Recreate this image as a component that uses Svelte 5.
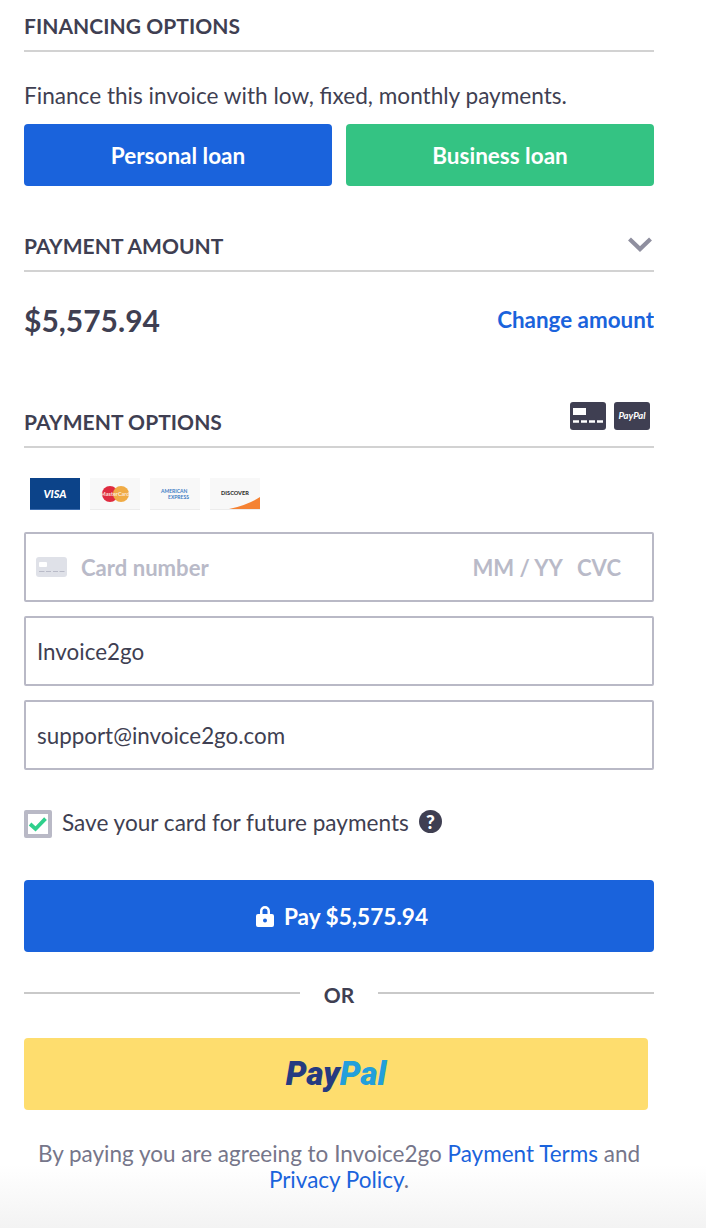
<script>
  const total = '$5,575.94';
  const brands = ['visa', 'mc', 'amex', 'discover'];
</script>

<div class="page">
  <h2 class="head">FINANCING OPTIONS</h2>
  <p class="finance">Finance this invoice with low, fixed, monthly payments.</p>
  <div class="loans">
    <button class="loan blue">Personal loan</button>
    <button class="loan green">Business loan</button>
  </div>

  <div class="head amount-head">
    <h2>PAYMENT AMOUNT</h2>
    <svg class="chevron" width="26" height="16" viewBox="0 0 26 16">
      <path d="M2.5 3 L13 13 L23.5 3" fill="none" stroke="#8f8f9f" stroke-width="4.2" />
    </svg>
  </div>
  <div class="amount-row">
    <span class="amount">{total}</span>
    <a class="change">Change amount</a>
  </div>

  <div class="head options-head">
    <h2>PAYMENT OPTIONS</h2>
    <div class="methods">
      <div class="method">
        <svg width="36" height="28" viewBox="0 0 36 28">
          <rect x="3" y="6" width="13" height="7" fill="#fff" />
          <path d="M3 19.5h6M11 19.5h6M19 19.5h6M27 19.5h6" stroke="#fff" stroke-width="2.4" />
        </svg>
      </div>
      <div class="method pp">PayPal</div>
    </div>
  </div>

  <div class="brands">
    {#each brands as b}
      <div class="brand {b}">
        {#if b === 'visa'}
          <span>VISA</span>
        {:else if b === 'mc'}
          <i class="red"></i><i class="orange"></i><span>MasterCard</span>
        {:else if b === 'amex'}
          <span>AMERICAN<br /><em>EXPRESS</em></span>
        {:else}
          <span>DISCOVER</span>
          <svg width="50" height="32" viewBox="0 0 50 32"><path d="M14 32 Q36 28 50 19 V32 Z" fill="#f58233" /></svg>
        {/if}
      </div>
    {/each}
  </div>

  <div class="field card">
    <svg width="31" height="20" viewBox="0 0 31 20">
      <rect width="31" height="20" rx="3" fill="#dfe1e8" />
      <rect x="3" y="5" width="8" height="5" rx="1" fill="#fff" />
      <path d="M3 14.5h5.5M10 14.5h5M17 14.5h5M23.500 14.500h5" stroke="#b9bbc8" stroke-width="1.200" />
    </svg>
    <span class="ph num">Card number</span>
    <span class="ph date">MM / YY</span>
    <span class="ph cvc">CVC</span>
  </div>
  <div class="field">Invoice2go</div>
  <div class="field">support@invoice2go.com</div>

  <div class="save">
    <span class="check">
      <svg width="24" height="20" viewBox="0 0 24 20">
        <path d="M2.500 10 L9 16 L21 3.500" fill="none" stroke="#2fd08c" stroke-width="4.500" />
      </svg>
    </span>
    <span class="save-label">Save your card for future payments</span>
    <span class="help">?</span>
  </div>

  <button class="pay">
    <svg width="18" height="22" viewBox="0 0 18 22">
      <path fill-rule="evenodd" fill="#fff" d="M4 9V6a5 5 0 0 1 10 0v3h2a2 2 0 0 1 2 2v9a2 2 0 0 1-2 2H2a2 2 0 0 1-2-2v-9a2 2 0 0 1 2-2zM6.500 9h5V6a2.500 2.500 0 0 0-5 0zM9 13.500a2 2 0 1 0 0 4 2 2 0 0 0 0-4z" />
    </svg>
    Pay {total}
  </button>

  <div class="or"><span>OR</span></div>

  <button class="paypal"><b>Pay</b><b class="pal">Pal</b></button>

  <p class="terms">
    By paying you are agreeing to Invoice2go <a>Payment Terms</a> and<br />
    <a>Privacy Policy</a>.
  </p>
</div>

<style>
  :global(body) {
    margin: 0;
    overflow: hidden;
    background: linear-gradient(#fff 1165px, #f3f3f3 1228px);
    height: 1228px;
  }
  .page {
    box-sizing: border-box;
    width: 630px;
    height: 1228px;
    margin-left: 24px;
    overflow: hidden;
    font-family: Lato, sans-serif;
    color: #3f3f52;
    font-size: 22.6px;
  }
  h2 {
    margin: 0;
    font-size: 21px;
    font-weight: 700;
    line-height: 24px;
    color: #3f3f52;
    letter-spacing: 0.05px;
  }
  .head {
    box-sizing: border-box;
    border-bottom: 2px solid #d2d2d2;
    height: 52px;
    padding-top: 14px;
    margin: 0;
  }
  .finance {
    margin: 0;
    height: 72px;
    padding-top: 31px;
    box-sizing: border-box;
    line-height: 26px;
  }
  .loans {
    display: flex;
    gap: 14px;
  }
  button {
    border: 0;
    font-family: inherit;
    color: #fff;
    display: block;
  }
  .loan {
    flex: 1;
    height: 62px;
    border-radius: 4px;
    font-size: 22.5px;
    font-weight: 700;
  }
  .blue { background: #1a63dc; }
  .green { background: #34c383; }
  .amount-head, .options-head {
    display: flex;
    justify-content: space-between;
    align-items: flex-start;
  }
  .amount-head {
    margin-top: 38px;
    height: 48px;
    padding-top: 10px;
  }
  .chevron { margin-right: 1px; margin-top: 2px; }
  .amount-row {
    display: flex;
    justify-content: space-between;
    align-items: center;
    height: 100px;
  }
  .amount {
    font-size: 30px;
    font-weight: 700;
    margin-top: -4px;
  }
  .change {
    font-size: 22.4px;
    font-weight: 700;
    color: #1a63dc;
    margin-top: -6px;
  }
  .options-head {
    height: 76px;
    padding-top: 29px;
  }
  .options-head h2 { margin-top: 9px; }
  .methods {
    display: flex;
    gap: 8px;
    margin-right: 4px;
    margin-top: 1px;
  }
  .method {
    width: 36px;
    height: 28px;
    border-radius: 3px;
    background: #3f3f52;
  }
  .method svg { display: block; }
  .pp {
    color: #fff;
    font-size: 9.5px;
    font-style: italic;
    font-weight: 700;
    line-height: 28px;
    text-align: center;
  }
  .brands {
    display: flex;
    gap: 10px;
    margin: 30px 0 22px 6px;
  }
  .brand {
    position: relative;
    width: 50px;
    height: 32px;
    box-sizing: border-box;
    background: #f8f8f8;
    border-bottom: 1px solid #ececec;
    display: flex;
    align-items: center;
    justify-content: center;
    overflow: hidden;
  }
  .visa {
    background: #0c4389;
    color: #fff;
    font-size: 11px;
    font-weight: 900;
    font-style: italic;
    border-bottom-color: #3d6db0;
  }
  .mc i {
    position: absolute;
    top: 8px;
    width: 16px;
    height: 16px;
    border-radius: 50%;
  }
  .mc .red { left: 12px; background: #df2b3f; }
  .mc .orange { left: 23px; background: #f0ab45; }
  .mc span {
    position: relative;
    font-size: 5.5px;
    font-weight: 700;
    color: #fbe8d8;
  }
  .amex span {
    font-size: 5px;
    line-height: 6px;
    font-weight: 700;
    color: #3d7cc4;
  }
  .amex em {
    font-style: normal;
    margin-left: 7px;
  }
  .discover span {
    font-size: 5.6px;
    font-weight: 900;
    color: #333;
    margin-top: -3px;
  }
  .discover svg {
    position: absolute;
    left: 0;
    top: 0;
  }
  .field {
    box-sizing: border-box;
    height: 70px;
    border: 2px solid #b9b9c6;
    border-radius: 2px;
    display: flex;
    align-items: center;
    padding: 1px 0 0 11px;
    margin-bottom: 14px;
    font-size: 22.4px;
  }
  .field.card { padding-left: 10px; }
  .field svg { margin-top: -1px; }
  .ph {
    color: #b9bac8;
    font-weight: 700;
    font-size: 22.1px;
  }
  .num { margin-left: 14px; }
  .date { margin-left: auto; }
  .cvc { margin: 0 31px 0 14px; }
  .save {
    display: flex;
    align-items: center;
    margin-top: 40px;
    height: 28px;
  }
  .save-label { margin-top: -4px; }
  .check {
    box-sizing: border-box;
    width: 28px;
    height: 28px;
    border: 4px solid #b9b9c6;
    border-radius: 2px;
    margin-right: 10px;
    display: flex;
    align-items: center;
    justify-content: center;
  }
  .help {
    width: 23px;
    height: 23px;
    border-radius: 50%;
    background: #3f3f52;
    color: #fff;
    margin: -5px 0 0 10px;
    font-size: 19px;
    font-weight: 900;
    line-height: 23px;
    text-align: center;
  }
  .pay {
    width: 100%;
    height: 72px;
    margin-top: 42px;
    padding-left: 12px;
    background: #1a63dc;
    border-radius: 4px;
    font-size: 22.6px;
    font-weight: 700;
    display: flex;
    align-items: center;
    justify-content: center;
    gap: 10px;
  }
  .or {
    display: flex;
    align-items: center;
    height: 86px;
    font-size: 21px;
    font-weight: 700;
  }
  .or::before, .or::after {
    content: '';
    flex: 1;
    height: 2px;
    background: #c9c9c9;
    margin-top: -4px;
  }
  .or span {
    width: 78px;
    text-align: center;
    margin-top: -2px;
  }
  .paypal {
    width: 624px;
    height: 72px;
    padding-bottom: 3px;
    background: #fedd6e;
    border-radius: 4px;
    font-family: Roboto, sans-serif;
    font-size: 33px;
    font-style: italic;
    color: #253b80;
  }
  .paypal b { font-weight: 900; }
  .pal { color: #239fdb; }
  .terms {
    margin: 31px 0 0 -10px;
    width: 650px;
    text-align: center;
    color: #76768a;
    line-height: 26px;
    font-size: 22.5px;
    font-weight: 400;
  }
  .terms a { color: #1a63dc; }
</style>
